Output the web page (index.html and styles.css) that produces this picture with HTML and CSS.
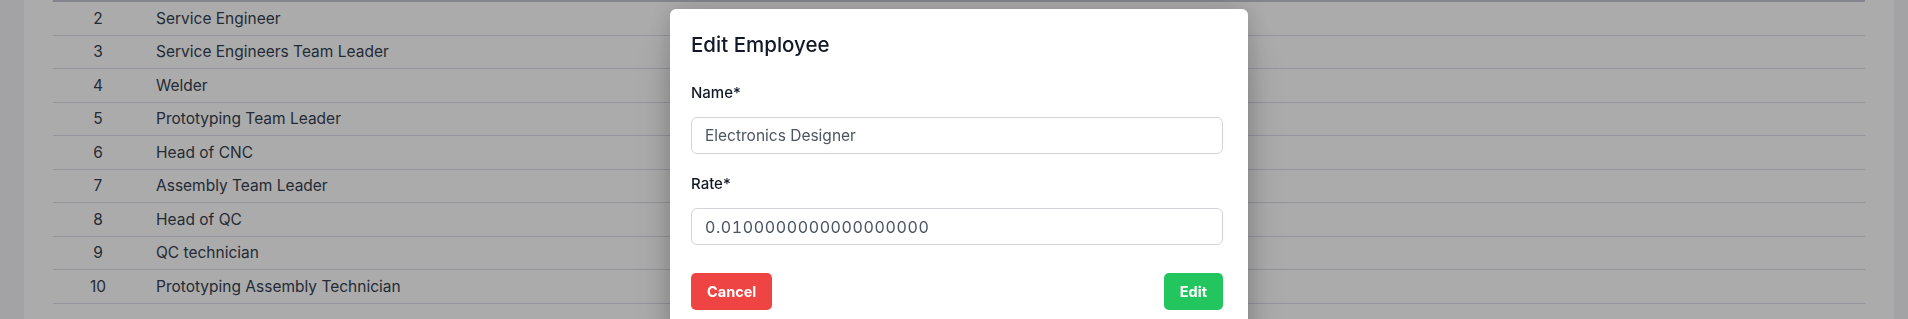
FILE: index.html
```html
<!DOCTYPE html>
<html lang="en">
  <head>
    <meta charset="UTF-8" />
    <meta name="viewport" content="width=device-width, initial-scale=1.0" />
    <title>Positions</title>
    <link rel="stylesheet" href="styles.css">
  </head>
  <body>
    <main class="card">
      <!-- positions table -->
      <div class="table">
        <div class="row"><div class="cell-id">2</div><div class="cell-name">Service Engineer</div></div>
        <div class="row"><div class="cell-id">3</div><div class="cell-name">Service Engineers Team Leader</div></div>
        <div class="row"><div class="cell-id">4</div><div class="cell-name">Welder</div></div>
        <div class="row"><div class="cell-id">5</div><div class="cell-name">Prototyping Team Leader</div></div>
        <div class="row"><div class="cell-id">6</div><div class="cell-name">Head of CNC</div></div>
        <div class="row"><div class="cell-id">7</div><div class="cell-name">Assembly Team Leader</div></div>
        <div class="row"><div class="cell-id">8</div><div class="cell-name">Head of QC</div></div>
        <div class="row"><div class="cell-id">9</div><div class="cell-name">QC technician</div></div>
        <div class="row"><div class="cell-id">10</div><div class="cell-name">Prototyping Assembly Technician</div></div>
      </div>
    </main>

    <!-- edit modal -->
    <div class="overlay">
      <div class="modal">
        <h2 class="modal-title">Edit Employee</h2>
        <div class="field">
          <label class="field-label">Name*</label>
          <input class="field-input" type="text" value="Electronics Designer">
        </div>
        <div class="field">
          <label class="field-label">Rate*</label>
          <input class="field-input field-number" type="text" value="0.0100000000000000000">
        </div>
        <div class="actions">
          <button class="btn btn-cancel">Cancel</button>
          <button class="btn btn-edit">Edit</button>
        </div>
      </div>
    </div>
  </body>
</html>
```

FILE: styles.css
```css
body {
  font-family: Inter, "Noto Sans", sans-serif;
  margin: 0;
  padding: 0 14px 0 24px;
  background-color: #f3f4f6;
  height: 319px;
  overflow: hidden;
}

.card {
  background-color: #ffffff;
  padding: 0 29px;
  height: 100%;
}

.table {
  border-top: 2px solid #c4c7d0;
}
.row {
  display: flex;
  align-items: center;
  height: 33.5px;
  box-sizing: border-box;
  border-bottom: 1px solid #dcdee6;
  font-size: 15.5px;
  color: #374151;
}
.cell-id {
  width: 90px;
  text-align: center;
}
.cell-name {
  padding-left: 13px;
}

.overlay {
  position: fixed;
  inset: 0;
  background-color: rgba(0, 0, 0, 0.33);
  display: flex;
  justify-content: center;
  align-items: flex-start;
  padding-left: 10px;
}

.modal {
  width: 578px;
  box-sizing: border-box;
  margin-top: 9px;
  padding: 22px 25px 40px 21px;
  background-color: #ffffff;
  border-radius: 6px;
  box-shadow: 0 25px 50px -12px rgba(0, 0, 0, 0.25), 0 0 24px rgba(0, 0, 0, 0.18);
}
.modal-title {
  margin: 0 0 24px;
  font-size: 20.5px;
  line-height: 28px;
  font-weight: 500;
  color: #111827;
}

.field {
  margin-bottom: 20px;
}
.field-label {
  display: block;
  font-size: 15px;
  line-height: 20px;
  font-weight: 500;
  color: #111827;
  margin-bottom: 14px;
}
.field-input {
  display: block;
  width: 100%;
  height: 37px;
  box-sizing: border-box;
  padding: 0 13px;
  border: 1px solid #d1d5db;
  border-radius: 6px;
  font-family: Inter, "Noto Sans", sans-serif;
  font-size: 15.5px;
  color: #4b5563;
  background-color: #ffffff;
}
.field-number {
  font-size: 16px;
  font-variant-numeric: tabular-nums;
  letter-spacing: 0.6px;
}

.actions {
  display: flex;
  justify-content: space-between;
  margin-top: 28px;
}
.btn {
  height: 37px;
  padding: 0 16px;
  border: none;
  border-radius: 5px;
  color: #ffffff;
  font-family: Inter, "Noto Sans", sans-serif;
  font-size: 14.5px;
  font-weight: 700;
  cursor: pointer;
}
.btn-cancel {
  background-color: #ef4444;
}
.btn-edit {
  background-color: #22c55e;
}
```
